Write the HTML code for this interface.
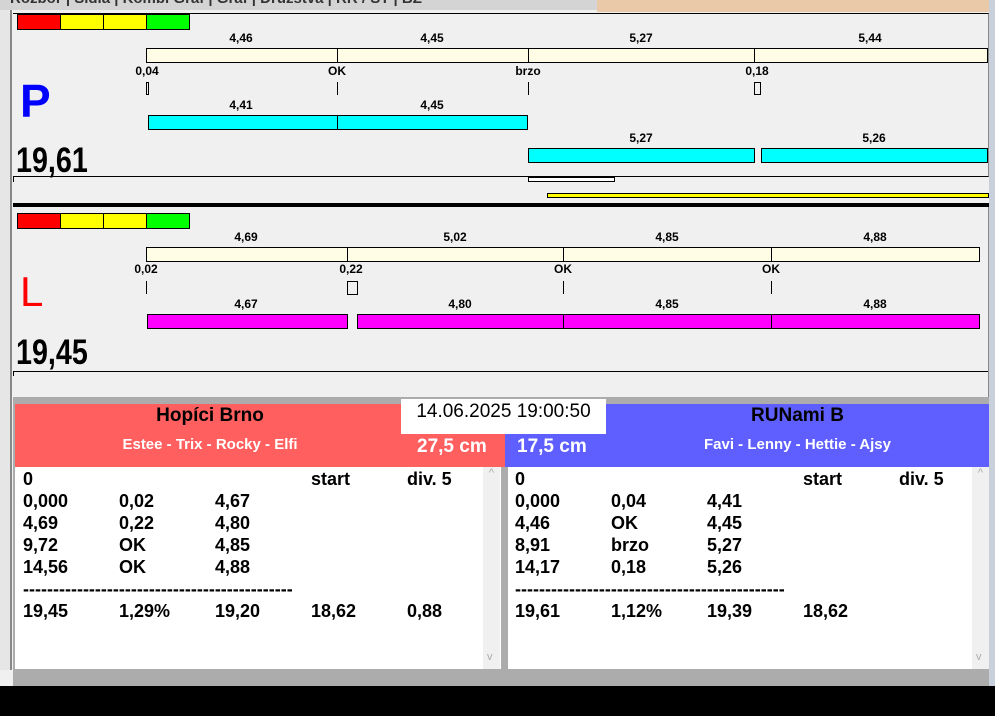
<!DOCTYPE html>
<html><head><style>
*{margin:0;padding:0;box-sizing:border-box}
body{width:995px;height:716px;position:relative;overflow:hidden;background:#f0f0f0;font-family:"Liberation Sans",Arial,sans-serif}
div{position:absolute}
.lab{font-size:12px;font-weight:bold;width:80px;text-align:center;margin-left:-40px;line-height:14px}
.bar{border:1px solid #000}
.vl{width:1px;background:#000}
.sq{height:16px;width:44px;border:1px solid #000}
.row{font-size:18px;font-weight:bold;line-height:22px;white-space:nowrap;width:470px;height:200px}
.c{position:absolute}
</style></head><body>
<!-- tabs -->
<div style="left:0;top:0;width:597px;height:10px;background:#d4d4d4"></div>
<div style="left:597px;top:0;width:392px;height:12px;background:#e9c9a8"></div>
<div style="left:10px;top:-10px;font-size:15px;font-weight:bold;color:#333;white-space:pre">Rozbor | Sidla | Kombi Graf | Graf | Druzstva | RR / ST | BZ</div>
<div style="left:0;top:10px;width:12px;height:660px;background:#e6e6e6;border-right:2px solid #888"></div>
<!-- upper panel -->
<div style="left:13px;top:13px;width:976px;height:164px;border-top:1px solid #000;border-right:1px solid #888;border-bottom:1px solid #000"></div>
<div class="sq" style="left:17px;top:14px;background:#f00"></div>
<div class="sq" style="left:60px;top:14px;background:#ff0"></div>
<div class="sq" style="left:103px;top:14px;background:#ff0"></div>
<div class="sq" style="left:146px;top:14px;background:#0f0"></div>
<div class="lab" style="left:241px;top:31px">4,46</div>
<div class="lab" style="left:432px;top:31px">4,45</div>
<div class="lab" style="left:641px;top:31px">5,27</div>
<div class="lab" style="left:870px;top:31px">5,44</div>
<div class="bar" style="left:146px;top:48px;width:842px;height:15px;background:#fffde6"></div>
<div class="vl" style="left:337px;top:48px;height:15px"></div>
<div class="vl" style="left:528px;top:48px;height:15px"></div>
<div class="vl" style="left:754px;top:48px;height:15px"></div>
<div class="lab" style="left:147px;top:64px">0,04</div>
<div class="lab" style="left:337px;top:64px">OK</div>
<div class="lab" style="left:528px;top:64px">brzo</div>
<div class="lab" style="left:757px;top:64px">0,18</div>
<div class="bar" style="left:146px;top:82px;width:3px;height:13px"></div>
<div class="vl" style="left:337px;top:82px;height:13px"></div>
<div class="vl" style="left:528px;top:82px;height:13px"></div>
<div class="bar" style="left:754px;top:82px;width:7px;height:13px"></div>
<div style="left:20px;top:74px;font-size:46px;font-weight:bold;color:#0000ff">P</div>
<div class="lab" style="left:241px;top:98px">4,41</div>
<div class="lab" style="left:432px;top:98px">4,45</div>
<div class="bar" style="left:148px;top:115px;width:380px;height:15px;background:#00ffff"></div>
<div class="vl" style="left:337px;top:115px;height:15px"></div>
<div class="lab" style="left:641px;top:131px">5,27</div>
<div class="lab" style="left:874px;top:131px">5,26</div>
<div class="bar" style="left:528px;top:148px;width:227px;height:15px;background:#00ffff"></div>
<div class="bar" style="left:761px;top:148px;width:227px;height:15px;background:#00ffff"></div>
<div style="left:16px;top:141px;font-size:35px;font-weight:bold;transform:scaleX(.82);transform-origin:left">19,61</div>
<div class="bar" style="left:528px;top:177px;width:87px;height:5px;background:#fff"></div>
<div class="vl" style="left:13px;top:177px;height:5px"></div>
<div class="bar" style="left:547px;top:193px;width:442px;height:5px;background:#ff0"></div>
<div style="left:13px;top:203px;width:976px;height:4px;background:#000"></div>
<!-- lower panel -->
<div style="left:13px;top:371px;width:976px;height:1px;background:#000"></div>
<div style="left:988px;top:207px;width:1px;height:190px;background:#888"></div>
<div class="sq" style="left:17px;top:213px;background:#f00"></div>
<div class="sq" style="left:60px;top:213px;background:#ff0"></div>
<div class="sq" style="left:103px;top:213px;background:#ff0"></div>
<div class="sq" style="left:146px;top:213px;background:#0f0"></div>
<div class="lab" style="left:246px;top:230px">4,69</div>
<div class="lab" style="left:455px;top:230px">5,02</div>
<div class="lab" style="left:667px;top:230px">4,85</div>
<div class="lab" style="left:875px;top:230px">4,88</div>
<div class="bar" style="left:146px;top:247px;width:834px;height:15px;background:#fffde6"></div>
<div class="vl" style="left:347px;top:247px;height:15px"></div>
<div class="vl" style="left:563px;top:247px;height:15px"></div>
<div class="vl" style="left:771px;top:247px;height:15px"></div>
<div class="lab" style="left:146px;top:262px">0,02</div>
<div class="lab" style="left:351px;top:262px">0,22</div>
<div class="lab" style="left:563px;top:262px">OK</div>
<div class="lab" style="left:771px;top:262px">OK</div>
<div class="vl" style="left:146px;top:281px;height:13px"></div>
<div class="bar" style="left:347px;top:281px;width:11px;height:14px"></div>
<div class="vl" style="left:563px;top:281px;height:13px"></div>
<div class="vl" style="left:771px;top:281px;height:13px"></div>
<div style="left:20px;top:268px;font-size:42px;color:#ff0000">L</div>
<div class="lab" style="left:246px;top:297px">4,67</div>
<div class="lab" style="left:460px;top:297px">4,80</div>
<div class="lab" style="left:667px;top:297px">4,85</div>
<div class="lab" style="left:875px;top:297px">4,88</div>
<div class="bar" style="left:147px;top:314px;width:201px;height:15px;background:#ff00ff"></div>
<div class="bar" style="left:357px;top:314px;width:623px;height:15px;background:#ff00ff"></div>
<div class="vl" style="left:563px;top:314px;height:15px"></div>
<div class="vl" style="left:771px;top:314px;height:15px"></div>
<div style="left:16px;top:333px;font-size:35px;font-weight:bold;transform:scaleX(.82);transform-origin:left">19,45</div>
<div class="vl" style="left:13px;top:371px;height:5px"></div>
<!-- bottom area -->
<div style="left:13px;top:397px;width:977px;height:290px;background:#acacac"></div>
<div style="left:15px;top:404px;width:490px;height:63px;background:#ff5f5f"></div>
<div style="left:505px;top:404px;width:484px;height:63px;background:#5f5fff"></div>
<div style="left:15px;top:405px;width:390px;text-align:center;font-size:19px;font-weight:bold">Hopíci Brno</div>
<div style="left:15px;top:436px;width:390px;text-align:center;font-size:15px;font-weight:bold;color:#fff">Estee - Trix - Rocky - Elfi</div>
<div style="left:417px;top:436px;font-size:19px;font-weight:bold;color:#fff">27,5 cm</div>
<div style="left:517px;top:436px;font-size:19px;font-weight:bold;color:#fff">17,5 cm</div>
<div style="left:606px;top:405px;width:383px;text-align:center;font-size:19px;font-weight:bold">RUNami B</div>
<div style="left:606px;top:436px;width:383px;text-align:center;font-size:15px;font-weight:bold;color:#fff">Favi - Lenny - Hettie - Ajsy</div>
<div style="left:401px;top:399px;width:205px;height:35px;background:#fff;font-size:19px;text-align:center;line-height:26px">14.06.2025 19:00:50</div>
<div style="left:15px;top:467px;width:486px;height:202px;background:#fff"></div>
<div style="left:483px;top:467px;width:17px;height:202px;background:#f0f0f0;color:#aaa;font-size:11px;text-align:center">^<br><span style="position:absolute;top:184px;left:4px">v</span></div>
<div style="left:508px;top:467px;width:481px;height:202px;background:#fff"></div>
<div style="left:972px;top:467px;width:17px;height:202px;background:#f0f0f0;color:#aaa;font-size:11px;text-align:center">^<br><span style="position:absolute;top:184px;left:4px">v</span></div>
<div style="left:0;top:686px;width:995px;height:30px;background:#000"></div>
<div class="row" style="left:23px;top:468px">
<span class="c" style="left:0;top:0">0</span><span class="c" style="left:288px;top:0">start</span><span class="c" style="left:384px;top:0">div. 5</span>
<span class="c" style="left:0;top:22px">0,000</span><span class="c" style="left:96px;top:22px">0,02</span><span class="c" style="left:192px;top:22px">4,67</span>
<span class="c" style="left:0;top:44px">4,69</span><span class="c" style="left:96px;top:44px">0,22</span><span class="c" style="left:192px;top:44px">4,80</span>
<span class="c" style="left:0;top:66px">9,72</span><span class="c" style="left:96px;top:66px">OK</span><span class="c" style="left:192px;top:66px">4,85</span>
<span class="c" style="left:0;top:88px">14,56</span><span class="c" style="left:96px;top:88px">OK</span><span class="c" style="left:192px;top:88px">4,88</span>
<span class="c" style="left:0;top:110px">---------------------------------------------</span>
<span class="c" style="left:0;top:132px">19,45</span><span class="c" style="left:96px;top:132px">1,29%</span><span class="c" style="left:192px;top:132px">19,20</span><span class="c" style="left:288px;top:132px">18,62</span><span class="c" style="left:384px;top:132px">0,88</span>
</div>
<div class="row" style="left:515px;top:468px">
<span class="c" style="left:0;top:0">0</span><span class="c" style="left:288px;top:0">start</span><span class="c" style="left:384px;top:0">div. 5</span>
<span class="c" style="left:0;top:22px">0,000</span><span class="c" style="left:96px;top:22px">0,04</span><span class="c" style="left:192px;top:22px">4,41</span>
<span class="c" style="left:0;top:44px">4,46</span><span class="c" style="left:96px;top:44px">OK</span><span class="c" style="left:192px;top:44px">4,45</span>
<span class="c" style="left:0;top:66px">8,91</span><span class="c" style="left:96px;top:66px">brzo</span><span class="c" style="left:192px;top:66px">5,27</span>
<span class="c" style="left:0;top:88px">14,17</span><span class="c" style="left:96px;top:88px">0,18</span><span class="c" style="left:192px;top:88px">5,26</span>
<span class="c" style="left:0;top:110px">---------------------------------------------</span>
<span class="c" style="left:0;top:132px">19,61</span><span class="c" style="left:96px;top:132px">1,12%</span><span class="c" style="left:192px;top:132px">19,39</span><span class="c" style="left:288px;top:132px">18,62</span>
</div>
<div style="left:989px;top:0;width:6px;height:686px;background:#c8d0dc"></div>
</body></html>
